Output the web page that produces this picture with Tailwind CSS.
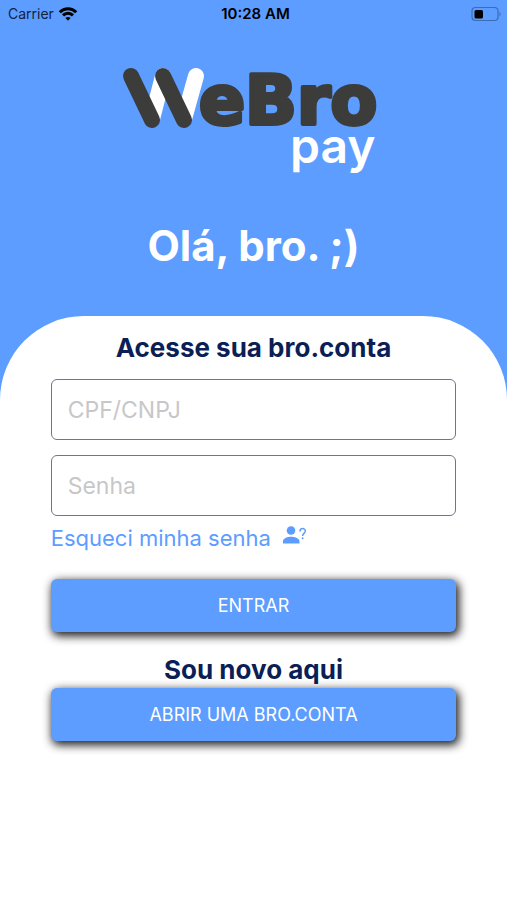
<!DOCTYPE html>
<html lang="pt-BR">
<head>
    <meta charset="UTF-8">
    <meta name="viewport" content="width=device-width, initial-scale=1.0">
    <title>WeBro pay</title>
    <script src="https://cdn.jsdelivr.net/npm/@tailwindcss/browser@4"></script>
</head>
<body class="min-h-screen bg-[#5c9dff] font-['Inter',sans-serif] flex flex-col">
    <!-- Status bar -->
    <div class="grid grid-cols-3 items-center h-7 pl-2 pr-1 text-sm text-black">
        <div class="flex items-center gap-1">
            <span class="text-[#12233d]">Carrier</span>
            <svg class="w-5 h-4" viewBox="0 0 20 16" fill="none" stroke="#000" stroke-width="3" aria-hidden="true">
                <path d="M1.8 6.2a11.6 11.6 0 0 1 16.4 0"/>
                <path d="M5 9.4a7 7 0 0 1 10 0"/>
                <path d="M10 14.8l-2.6-2.7a3.8 3.8 0 0 1 5.2 0z" fill="#000" stroke="none"/>
            </svg>
        </div>
        <span class="text-center text-[15px] font-semibold">10:28 AM</span>
        <svg class="w-8 h-4 justify-self-end" viewBox="0 0 32 16" aria-hidden="true">
            <rect x="1" y="1.5" width="26" height="13" rx="3.5" fill="none" stroke="#3c6cb8" stroke-width="1.2"/>
            <rect x="3.5" y="4" width="8.5" height="8.5" rx="1.5" fill="#000"/>
            <path d="M28.5 5.5q2.4 2.5 0 5z" fill="#3c6cb8"/>
        </svg>
    </div>

    <header class="flex flex-col items-center pt-9">
        <!-- Logo -->
        <svg class="w-64 h-[116px] overflow-visible" viewBox="126 64 256 116" role="img" aria-label="WeBro pay">
            <g fill="none" stroke-width="16" stroke-linecap="round">
                <path d="M152 119L163 76M184 119L196 76" stroke="#fff"/>
                <path d="M131 76L152 120M163 76L184 120" stroke="#3c3c3b"/>
            </g>
            <text x="199" y="124" font-size="68" font-weight="700" fill="#3c3c3b" stroke="#3c3c3b" stroke-width="4" stroke-linejoin="round" class="font-['DejaVu_Sans',sans-serif]">eBro</text>
            <text x="290" y="163" font-size="48" font-weight="600" fill="#fff">pay</text>
        </svg>
        <h1 class="mt-9 mb-10 text-[42px] leading-[60px] font-bold text-white">Olá, bro. ;)</h1>
    </header>

    <main class="grow bg-white rounded-t-[84px] pt-3">
        <form class="w-4/5 mx-auto flex flex-col">
            <h2 class="text-center text-[26px] leading-10 font-bold text-[#0b1f56]">Acesse sua bro.conta</h2>
            <input type="text" name="documento" aria-label="CPF/CNPJ" placeholder="CPF/CNPJ" class="mt-[11px] h-[61px] w-full px-4 border border-[#73738f] rounded-md text-[23px] placeholder:text-[#c7c7c9]">
            <input type="password" name="senha" aria-label="Senha" placeholder="Senha" class="mt-[15px] h-[61px] w-full px-4 border border-[#73738f] rounded-md text-[23px] placeholder:text-[#c7c7c9]">
            <a href="#" class="mt-1 flex items-start gap-2 text-[22px] leading-9 text-[#5c9dff]">
                Esqueci minha senha
                <svg class="mt-1 w-7 h-7" viewBox="0 0 28 28" fill="#5c9dff" aria-hidden="true">
                    <circle cx="12" cy="6.5" r="4.3"/>
                    <path d="M4 19.500v-2.500c0-2.900 5-4.300 8-4.300s8.500 1.400 8.500 4.300v2.500z"/>
                    <path d="M21 7.500c0-4 5.300-3.600 5.300-.5c0 2.400-2.700 2.400-2.700 5" fill="none" stroke="#5c9dff" stroke-width="1.500"/>
                    <circle cx="23.600" cy="14.200" r="1"/>
                </svg>
            </a>
            <button type="submit" class="mt-[23px] h-[53px] rounded-md bg-[#5c9dff] text-lg text-white shadow-[2px_3px_10px_1px_rgba(0,0,0,0.9)]">ENTRAR</button>
            <h2 class="mt-5 text-center text-[26px] leading-9 font-bold text-[#0b1f56]">Sou novo aqui</h2>
            <button type="button" class="h-[53px] rounded-md bg-[#5c9dff] text-lg text-white shadow-[2px_3px_10px_1px_rgba(0,0,0,0.9)]">ABRIR UMA BRO.CONTA</button>
        </form>
    </main>
</body>
</html>
